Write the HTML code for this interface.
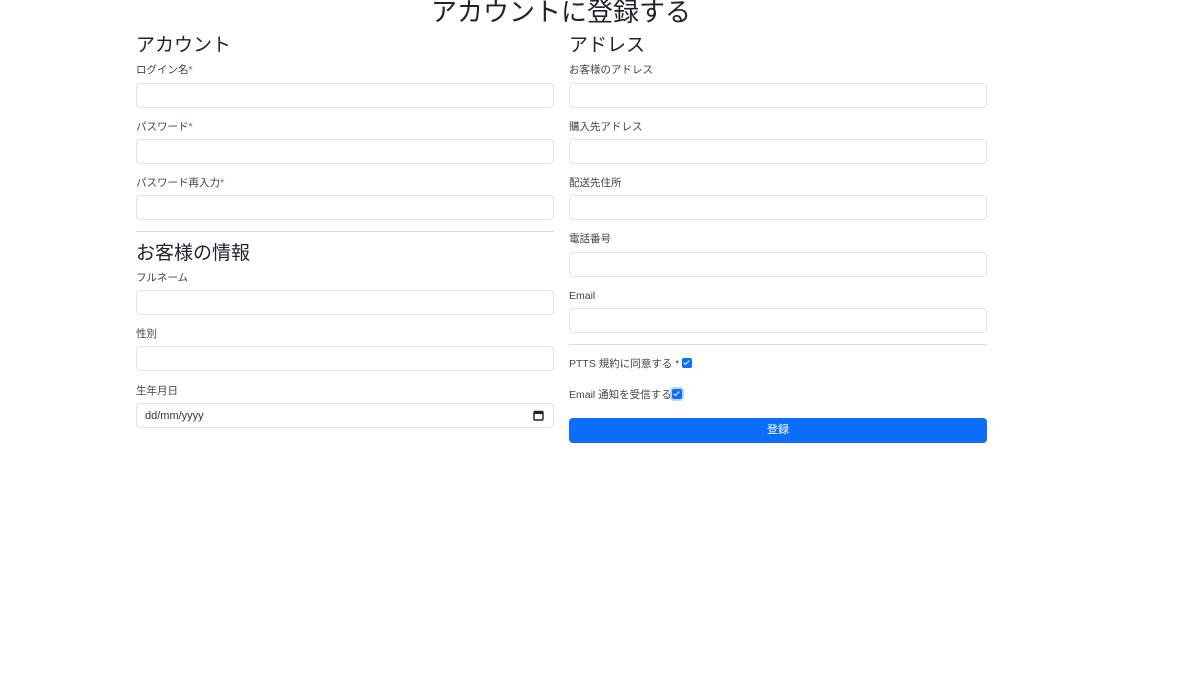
<!DOCTYPE html>
<html><head><meta charset="utf-8"><style>
*{box-sizing:border-box;margin:0;padding:0}
body{width:1200px;height:687px;background:#fff;font-family:"Liberation Sans","Noto Sans CJK JP",sans-serif;color:#212529;position:relative;overflow:hidden}
.a{position:absolute;white-space:nowrap}
.t{font-size:26px;line-height:28px;top:-2px;left:0;width:1122px;text-align:center}
.h{font-size:19px;line-height:22px}
.l{font-size:10.5px;line-height:14px;color:#444}
.r{color:#dc3545}
.i{position:absolute;height:25px;border:1px solid #e1e4e8;border-radius:4px;background:#fff}
.L{left:136px;width:418px}.R{left:569px;width:418px}
.hr{position:absolute;height:1px;background:#dcdcdc}
.cb{display:inline-block;width:10px;height:10px;background:#0d6efd;border-radius:2px;vertical-align:-1px;position:relative}
.cb:after{content:"";position:absolute;left:3px;top:1px;width:2px;height:5px;border:solid #fff;border-width:0 1.5px 1.5px 0;transform:rotate(45deg)}
</style></head><body>
<div class="a t">アカウントに登録する</div>

<div class="a h" style="left:136px;top:35px">アカウント</div>
<div class="a l" style="left:136px;top:63px">ログイン名<span class="r">*</span></div>
<div class="i L" style="top:83px"></div>
<div class="a l" style="left:136px;top:120px">パスワード<span class="r">*</span></div>
<div class="i L" style="top:139px"></div>
<div class="a l" style="left:136px;top:176px">パスワード再入力<span class="r">*</span></div>
<div class="i L" style="top:195px"></div>
<div class="hr" style="left:136px;width:418px;top:231px"></div>
<div class="a h" style="left:136px;top:243px">お客様の情報</div>
<div class="a l" style="left:136px;top:271px">フルネーム</div>
<div class="i L" style="top:290px"></div>
<div class="a l" style="left:136px;top:327px">性別</div>
<div class="i L" style="top:346px"></div>
<div class="a l" style="left:136px;top:384px">生年月日</div>
<div class="i L" style="top:403px;font-size:11px;padding:6px 8px;color:#333">dd/mm/yyyy
<svg style="position:absolute;right:9px;top:6px" width="11" height="11" viewBox="0 0 11 11"><rect x="1" y="1.5" width="9" height="8.5" rx="1" fill="none" stroke="#222" stroke-width="1.4"/><rect x="1" y="1.5" width="9" height="2.5" fill="#222"/></svg></div>

<div class="a h" style="left:569px;top:35px">アドレス</div>
<div class="a l" style="left:569px;top:63px">お客様のアドレス</div>
<div class="i R" style="top:83px"></div>
<div class="a l" style="left:569px;top:120px">購入先アドレス</div>
<div class="i R" style="top:139px"></div>
<div class="a l" style="left:569px;top:176px">配送先住所</div>
<div class="i R" style="top:195px"></div>
<div class="a l" style="left:569px;top:232px">電話番号</div>
<div class="i R" style="top:252px"></div>
<div class="a l" style="left:569px;top:289px">Email</div>
<div class="i R" style="top:308px"></div>
<div class="hr" style="left:569px;width:418px;top:344px"></div>
<div class="a l" style="left:569px;top:357px">PTTS 規約に同意する * <span class="cb"></span></div>
<div class="a l" style="left:569px;top:388px">Email 通知を受信する<span class="cb" style="box-shadow:0 0 0 2px #b6d4fe"></span></div>
<div class="a" style="left:569px;top:418px;width:418px;height:25px;background:#0d6efd;border-radius:4px;color:#fff;font-size:11px;line-height:25px;text-align:center">登録</div>
</body></html>
